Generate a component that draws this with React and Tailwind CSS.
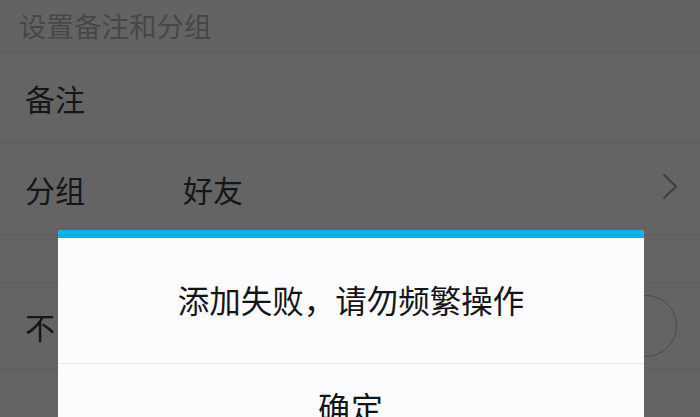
export default function App() {
  const font = { fontFamily: '"Noto Sans CJK SC", "Noto Sans", sans-serif' };
  return (
    <div className="relative w-[700px] h-[417px] overflow-hidden bg-[#656464]" style={font}>
      <div className="h-[53px] flex items-center pl-[19px] border-b border-[#5b5a5a] bg-[#646363]">
        <span className="text-[27.5px] leading-none text-[#474747]">设置备注和分组</span>
      </div>
      <div className="h-[90px] flex items-center pl-[25px] border-b border-[#5d5c5c]">
        <span className="text-[30px] leading-none text-[#161616]">备注</span>
      </div>
      <div className="h-[92px] flex items-center pl-[25px] pr-[22px] border-b border-[#5d5c5c]">
        <span className="text-[30px] leading-none text-[#161616] w-[158px]">分组</span>
        <span className="text-[30px] leading-none text-[#161616] flex-1">好友</span>
        <svg width="16" height="28" viewBox="0 0 16 28" className="mb-[4px]">
          <polyline points="1.5,1.5 14,13.5 1.5,25.5" fill="none" stroke="#3e3e3e" strokeWidth="2" />
        </svg>
      </div>
      <div className="h-[48px] border-b border-[#5d5c5c]" />
      <div className="h-[87px] flex items-center pl-[25px] pr-[23px] border-b border-[#5d5c5c]">
        <span className="text-[30px] leading-none text-[#161616] flex-1">不</span>
        <div className="w-[62px] h-[62px] rounded-full border-[1.5px] border-[#4a4a4a]" />
      </div>
      <div className="h-[60px]" />

      <div className="absolute left-[58px] top-[230px] w-[586px] h-[200px] rounded-t-[4px] overflow-hidden bg-[#fcfcfe]">
        <div className="h-[8px] bg-[#0cb1e6]" />
        <div className="h-[126px] flex items-center justify-center border-b border-[#e6e6e8]">
          <span className="text-[31.5px] leading-none text-[#151515] mt-[-2px]">添加失败，请勿频繁操作</span>
        </div>
        <div className="flex justify-center pt-[26px]">
          <span className="text-[32px] leading-none text-[#151515] tracking-[1px]">确定</span>
        </div>
      </div>
    </div>
  );
}
